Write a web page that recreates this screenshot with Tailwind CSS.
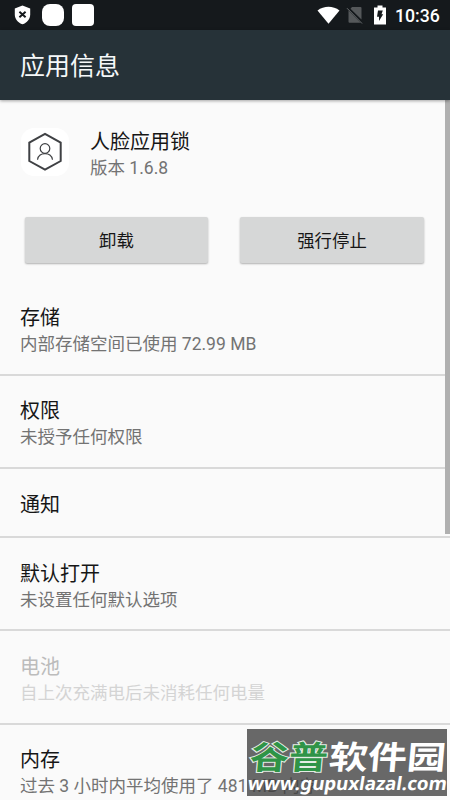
<!DOCTYPE html>
<html lang="zh-CN">
<head>
<meta charset="utf-8">
<title>应用信息</title>
<script src="https://cdn.jsdelivr.net/npm/@tailwindcss/browser@4"></script>
</head>
<body class="w-[450px] h-[800px] overflow-hidden bg-[#fafafa] font-[Roboto,'Noto_Sans_CJK_SC',sans-serif] text-[#161616]">
<div class="relative w-[450px] h-[800px] overflow-hidden flex flex-col">
  <div class="h-[30px] shrink-0 bg-[#15191c] flex items-center text-white pl-[14px] pr-[10px]">
    <svg class="w-[17px] h-[20px]" viewBox="0 0 17 20"><path d="M8.500 .5 16.200 3.500V9.500C16.200 14 13 17.800 8.500 19.300 4 17.800 .8 14 .8 9.500V3.500Z" fill="#fff"/><path d="M5.400 6.700 11.600 12.300M11.600 6.700 5.400 12.300" stroke="#15191c" stroke-width="1.900"/></svg>
    <div class="ml-[11px] size-[22px] rounded-[8px] bg-white"></div>
    <div class="ml-[8px] w-[22px] h-[22px] rounded-[4px] bg-white"></div>
    <div class="grow"></div>
    <svg class="w-[23px] h-[18px]" viewBox="0 0 23 18"><path d="M.5 4.500C7-.4 16-.4 22.500 4.500L11.500 17.800Z" fill="#fff"/></svg>
    <svg class="ml-[6px] w-[18px] h-[18px]" viewBox="0 0 18 18"><path d="M6 1H14.500Q15.500 1 15.500 2V13.500L4.500 2.800Z M2.500 4.500 14.500 16.800H3.500Q2.500 16.800 2.500 15.800Z" fill="#55585a"/><path d="M1 2.200 16 17.500" stroke="#6a6d6f" stroke-width="1"/></svg>
    <svg class="ml-[10px] w-[12px] h-[20px]" viewBox="0 0 12 20"><path d="M3.500 .5H8.500V2.500H12V19.500H0V2.500H3.500Z" fill="#fff"/><path d="M4 5.500H8.800L7.500 9.300H9.200L5 16V11.800H3Z" fill="#15191c"/></svg>
    <div class="ml-[9px] w-[45px] pt-px text-[17.700px] leading-[30px] font-medium whitespace-nowrap">10:36</div>
  </div>
  <div class="h-[70px] shrink-0 bg-[#263238] text-[#f5f8f9] shadow-[0_1px_3px_rgba(0,0,0,0.35)] flex items-center pl-[20px] pt-[4px] text-[25px] z-10">应用信息</div>
  <div class="h-[182px] shrink-0">
    <div class="flex pl-[21px] pt-[28px]">
      <div class="size-[48px] rounded-[13px] bg-white">
        <svg class="size-[48px]" viewBox="0 0 48 48" fill="none" stroke="#3f4144"><path d="M24 5.900 39.700 14.600V33L24 41.700 8.300 33V14.600Z" stroke-width="2"/><circle cx="24" cy="20.500" r="4.800" stroke-width="1.200"/><path d="M16.500 31.700C17.500 23.500 30.500 23.500 31.500 31.700" stroke-width="1.200"/></svg>
      </div>
      <div class="pl-[21px] pt-px">
        <div class="text-[20px] leading-[26px]">人脸应用锁</div>
        <div class="text-[17.500px] leading-[26px] text-[#737373]">版本 1.6.8</div>
      </div>
    </div>
    <div class="flex gap-[32px] pl-[25px] pt-[36px] text-[17.400px]">
      <div class="w-[183px] h-[46px] rounded-[2px] bg-[#d6d7d7] shadow-[0_1px_2px_rgba(0,0,0,0.3)] flex items-center justify-center pt-[2px]">卸载</div>
      <div class="w-[184px] h-[46px] rounded-[2px] bg-[#d6d7d7] shadow-[0_1px_2px_rgba(0,0,0,0.3)] flex items-center justify-center pt-[2px]">强行停止</div>
    </div>
  </div>
  <div class="h-[94px] shrink-0 border-b-2 border-[#d9d9d9] pl-[20px] pt-[23px]">
    <div class="text-[20px] leading-[26px]">存储</div>
    <div class="text-[17.500px] leading-[26px] text-[#737373]">内部存储空间已使用 72.99 MB</div>
  </div>
  <div class="h-[93px] shrink-0 border-b-2 border-[#d9d9d9] pl-[20px] pt-[22px]">
    <div class="text-[20px] leading-[26px]">权限</div>
    <div class="text-[17.500px] leading-[26px] text-[#737373]">未授予任何权限</div>
  </div>
  <div class="h-[69px] shrink-0 border-b-2 border-[#d9d9d9] pl-[20px] pt-[23px]">
    <div class="text-[20px] leading-[26px]">通知</div>
  </div>
  <div class="h-[93px] shrink-0 border-b-2 border-[#d9d9d9] pl-[20px] pt-[23px]">
    <div class="text-[20px] leading-[26px]">默认打开</div>
    <div class="text-[17.500px] leading-[26px] text-[#737373]">未设置任何默认选项</div>
  </div>
  <div class="h-[94px] shrink-0 border-b-2 border-[#d9d9d9] pl-[20px] pt-[23px]">
    <div class="text-[20px] leading-[26px] text-[#bcbcbc]">电池</div>
    <div class="text-[17.500px] leading-[26px] text-[#d4d4d4]">自上次充满电后未消耗任何电量</div>
  </div>
  <div class="h-[94px] shrink-0 pl-[20px] pt-[22px]">
    <div class="text-[20px] leading-[26px]">内存</div>
    <div class="text-[17.500px] leading-[26px] text-[#737373]">过去 3 小时内平均使用了 481 MB 内存</div>
  </div>
  <div class="absolute right-0 top-[100px] w-[5px] h-[434px] bg-[#b0b0b0]"></div>
  <div class="absolute left-[247px] top-[729px] w-[200px] h-[67px] bg-[#3c3c3c]/77">
    <svg class="w-[200px] h-[67px] overflow-visible" viewBox="0 0 200 67">
      <g font-family="'Noto Sans CJK SC',sans-serif" font-weight="700" font-size="39" transform="translate(0 39.500) skewX(-5) scale(1 .83)">
        <text x="2" y="0" textLength="78" lengthAdjust="spacingAndGlyphs" fill="#2f9447" stroke="#e4ede5" stroke-width="2.400" paint-order="stroke">谷普</text>
        <text x="81" y="0" textLength="117" lengthAdjust="spacingAndGlyphs" fill="#fff">软件园</text>
      </g>
      <text transform="translate(0 60.500) skewX(-9)" x="0" y="0" textLength="199" lengthAdjust="spacingAndGlyphs" font-family="'Noto Sans','Open Sans',sans-serif" font-weight="700" font-size="18.500" fill="#fff">www.gupuxlazal.com</text>
    </svg>
  </div>
</div>
</body>
</html>
